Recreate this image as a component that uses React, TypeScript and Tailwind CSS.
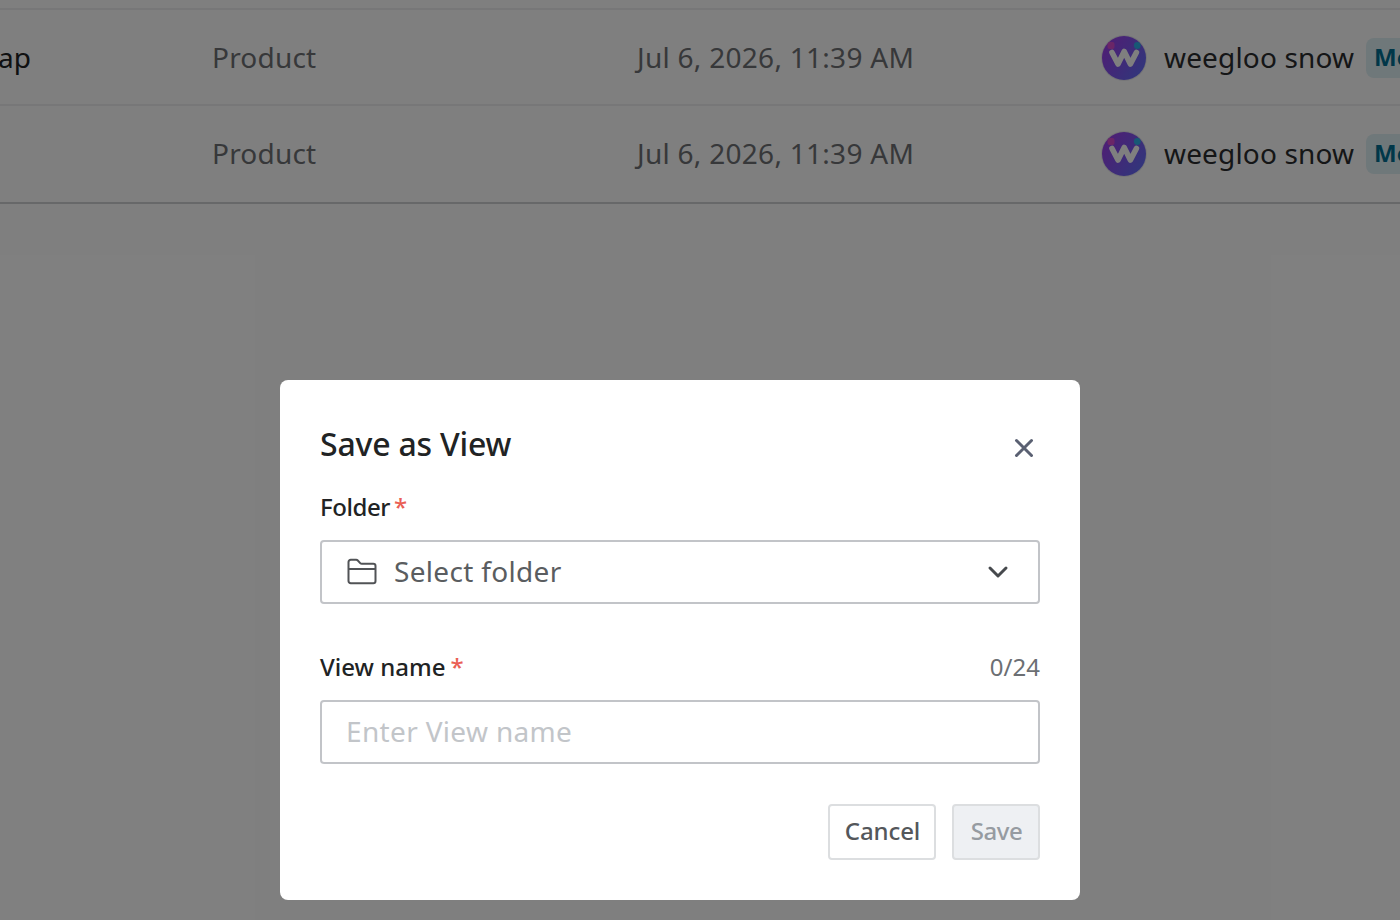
import { useState } from 'react'

const rows = [
  { id: 1, name: 'Roadmap', type: 'Product', updatedAt: 'Jul 6, 2026, 11:39 AM', author: 'weegloo snow' },
  { id: 2, name: '', type: 'Product', updatedAt: 'Jul 6, 2026, 11:39 AM', author: 'weegloo snow' },
]

const MAX_NAME = 24

function Avatar() {
  return (
    <svg className="w-12 h-12 shrink-0" viewBox="0 0 48 48" fill="none">
      <defs>
        <linearGradient id="avatar-bg" x1="6" y1="12" x2="42" y2="36" gradientUnits="userSpaceOnUse">
          <stop stopColor="#9a40ea" />
          <stop offset="1" stopColor="#666af6" />
        </linearGradient>
        <clipPath id="avatar-clip">
          <circle cx="24" cy="24" r="22" />
        </clipPath>
      </defs>
      <circle cx="24" cy="24" r="23" fill="#e9e9ee" />
      <g clipPath="url(#avatar-clip)">
        <rect width="48" height="48" fill="url(#avatar-bg)" />
        <rect x="7.5" y="8" width="7" height="7" rx="2" fill="#d64ccf" />
        <circle cx="37.3" cy="11.5" r="3.4" fill="#2eb0ea" />
      </g>
      <path
        d="M12 18.500 L18 30 L24.200 17.500 L30.400 30 L36.400 18.500"
        stroke="#fff"
        strokeWidth="5.6"
        strokeLinecap="round"
        strokeLinejoin="round"
      />
    </svg>
  )
}

function FolderIcon() {
  return (
    <svg className="w-8 h-8 shrink-0" viewBox="0 0 32 32" fill="none" stroke="#515356" strokeWidth="2" strokeLinejoin="round">
      <path d="M2.500 6a2.200 2.200 0 0 1 2.200-2.200h5.400a2.200 2.200 0 0 1 1.700.7l2.400 2.600a2.200 2.200 0 0 0 1.600.7h11.500A2.200 2.200 0 0 1 29.500 10v15a2.200 2.200 0 0 1-2.200 2.200H4.700A2.200 2.200 0 0 1 2.500 25V6Z" />
      <path d="M2.500 13h27" />
    </svg>
  )
}

export default function App() {
  const [name, setName] = useState('')

  return (
    <div className="relative h-[920px] w-[1400px] overflow-hidden bg-white font-['Noto_Sans',sans-serif]">
      <div className="h-2.5 border-b-2 border-[#eeeef0]" />
      <div>
        {rows.map(row => (
          <div
            key={row.id}
            className="flex h-24 items-center border-b-2 border-[#eeeef0] pt-0.5 text-[28px] text-[#6e7174] last:h-[98px] last:border-[#cfd0d2] last:pt-0"
          >
            <div className="flex w-[212px] shrink-0 pb-0.5">
              <span className="flex w-[31px] justify-end whitespace-nowrap text-[#212324]">{row.name}</span>
            </div>
            <div className="w-[424px] shrink-0 pb-0.5 tracking-[0.2px]">{row.type}</div>
            <div className="w-[464px] shrink-0 pb-0.5 pl-px tracking-[0.28px] whitespace-nowrap">{row.updatedAt}</div>
            <div className="flex shrink-0 items-center">
              <Avatar />
              <span className="ml-4 w-[190px] pb-0.5 tracking-[0.15px] whitespace-nowrap text-[#2b2d2f]">{row.author}</span>
              <span className="ml-3 flex h-10 items-center rounded-lg bg-[#dff0f4] px-2 pb-0.5 text-2xl font-bold text-[#006f92]">
                Me
              </span>
            </div>
          </div>
        ))}
      </div>

      <div className="absolute inset-0 flex items-start justify-start bg-black/50 pt-[380px] pl-[280px]">
        <div className="h-[520px] w-[800px] rounded-lg bg-white p-10">
          <div className="flex h-[50px] items-center justify-between">
            <h2 className="pb-0.5 text-[32px] font-medium tracking-[-0.2px] text-[#212324]">Save as View</h2>
            <button type="button" className="mt-1.5 p-1.5" aria-label="Close">
              <svg className="h-5 w-5" viewBox="0 0 20 20" fill="none" stroke="#5a6072" strokeWidth="3" strokeLinecap="round">
                <path d="M2.500 2.500l15 15M17.500 2.500l-15 15" />
              </svg>
            </button>
          </div>

          <div className="mt-5 flex h-9 items-center pb-0.5 text-2xl font-medium tracking-[-0.45px] text-[#212324]">
            Folder<span className="ml-1 text-[#ea5f55]">*</span>
          </div>
          <button
            type="button"
            className="mt-3.5 flex h-16 w-full items-center rounded border-2 border-[#c2c4c8] px-6 text-[28px] text-[#5a5d60]"
          >
            <FolderIcon />
            <span className="ml-4 pb-0.5 tracking-[0.32px]">Select folder</span>
            <svg className="mr-1 ml-auto h-5 w-6" viewBox="0 0 24 20" fill="none" stroke="#46494d" strokeWidth="3" strokeLinecap="round" strokeLinejoin="round">
              <path d="M4 6l8 8 8-8" />
            </svg>
          </button>

          <div className="mt-[46px] flex h-9 items-center justify-between pb-0.5 text-2xl">
            <label htmlFor="view-name" className="font-medium text-[#212324]">
              View name<span className="ml-[5px] text-[#ea5f55]">*</span>
            </label>
            <span className="text-[#6c6f73]">{name.length}/{MAX_NAME}</span>
          </div>
          <input
            id="view-name"
            value={name}
            maxLength={MAX_NAME}
            onChange={e => setName(e.target.value)}
            placeholder="Enter View name"
            className="mt-3.5 h-16 w-full rounded border-2 border-[#c2c4c8] px-6 pb-0.5 text-[28px] tracking-[0.34px] text-[#212324] placeholder:text-[#c2c5c9]"
          />

          <div className="mt-10 flex justify-end gap-4 text-2xl font-medium">
            <button type="button" className="h-14 w-[108px] rounded border-2 border-[#dcdee0] pb-0.5 pl-px tracking-[-0.1px] text-[#54575b]">
              Cancel
            </button>
            <button type="button" disabled={!name} className="h-14 w-[88px] rounded border-2 border-[#dcdee0] bg-[#eef0f3] pb-0.5 pl-px tracking-[-0.45px] text-[#969ba1]">
              Save
            </button>
          </div>
        </div>
      </div>
    </div>
  )
}
